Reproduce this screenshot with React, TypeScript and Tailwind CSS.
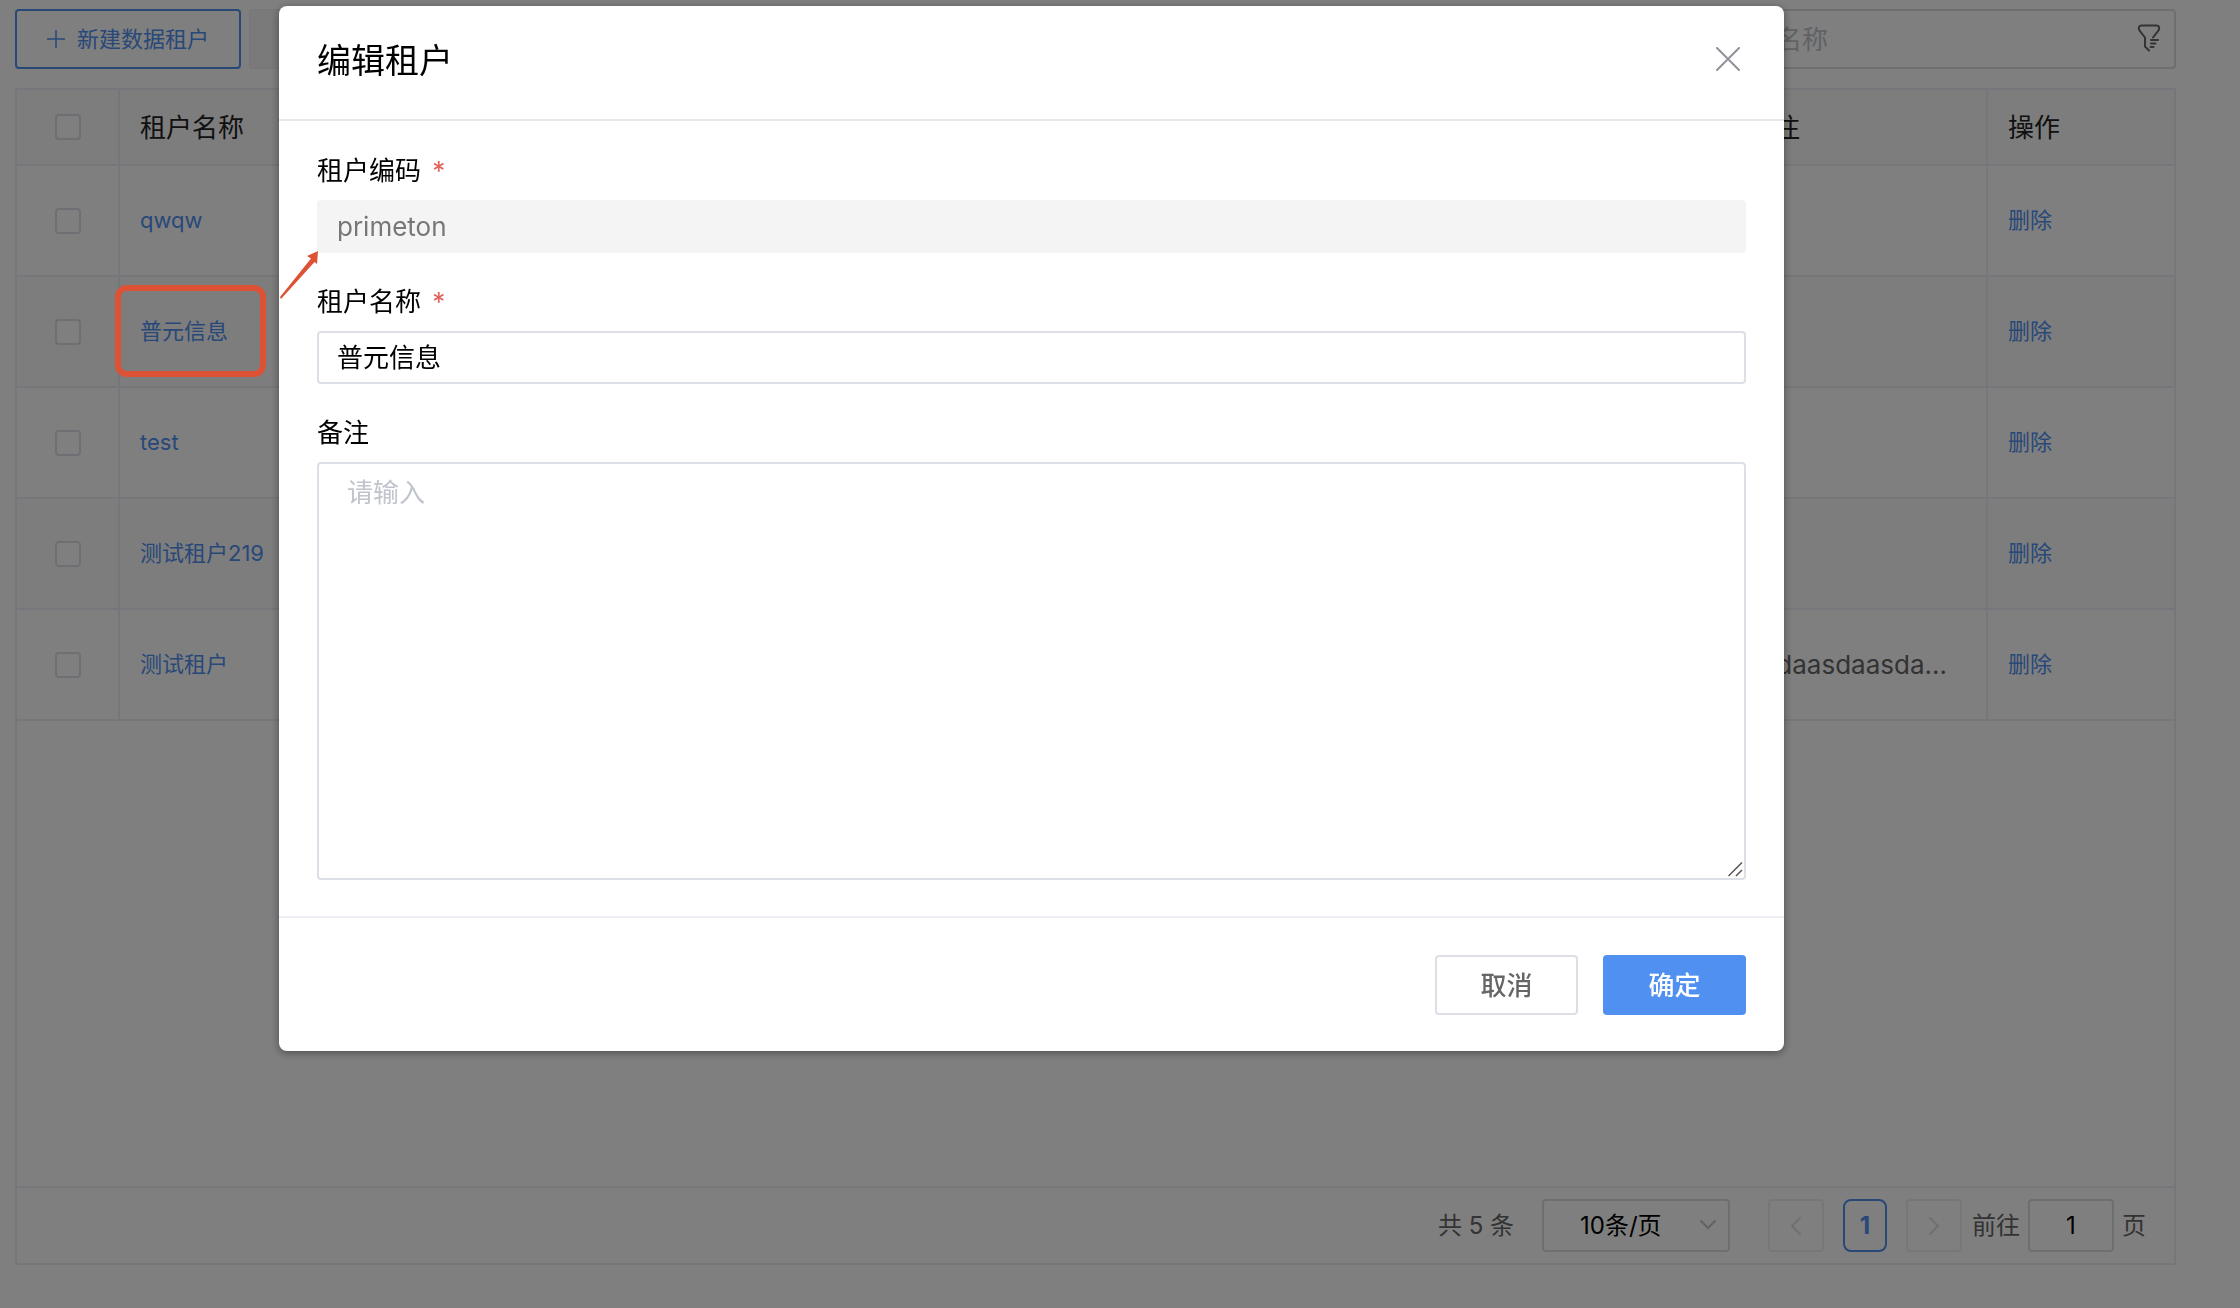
import { useState } from "react";
import { Trash2 } from "lucide-react";

type Tenant = {
  id: number;
  code: string;
  name: string;
  remark: string;
  marked?: boolean;
};

const TENANTS: Tenant[] = [
  { id: 1, code: "qwqw", name: "qwqw", remark: "" },
  { id: 2, code: "primeton", name: "普元信息", remark: "", marked: true },
  { id: 3, code: "test", name: "test", remark: "" },
  { id: 4, code: "test219", name: "测试租户219", remark: "" },
  { id: 5, code: "ceshi", name: "测试租户", remark: "asdaasdaasda..." },
];

const checkboxClass =
  "block mx-auto size-[26px] appearance-none rounded-sm border-2 border-[#dcdfe6] bg-white";

function FilterIcon() {
  return (
    <svg
      className="h-7 w-6"
      viewBox="0 0 24 28"
      fill="none"
      stroke="#666"
      strokeWidth="2"
      strokeLinecap="round"
      strokeLinejoin="round"
    >
      <path d="M16 13.5 L21.2 6.8 Q22.8 4.6 22 2.9 Q21.4 1.5 19.6 1.5 H4.4 Q2.6 1.5 2 2.9 Q1.2 4.6 2.8 6.8 L8 13.5 V22.5 L12 26.5" />
      <path d="M14 16 H21 M14 19.5 H18.5 M13.5 23 H16.5" />
    </svg>
  );
}

function Chevron({ d, className }: { d: string; className: string }) {
  return (
    <svg className={className} viewBox="0 0 20 20" fill="none" strokeWidth="2">
      <path d={d} stroke="currentColor" strokeLinecap="round" strokeLinejoin="round" />
    </svg>
  );
}

function Toolbar() {
  return (
    <div className="flex items-center justify-between">
      <div className="flex gap-2">
        <button className="flex h-[60px] items-center gap-3 rounded border-2 border-[#5090f1] bg-white px-[30px] text-[22px] text-[#5090f1]">
          <svg className="size-[18px]" viewBox="0 0 18 18" stroke="currentColor" strokeWidth="1.5">
            <path d="M9 0V18M0 9H18" />
          </svg>
          新建数据租户
        </button>
        <button
          disabled
          aria-label="批量删除"
          className="flex h-[60px] w-36 items-center justify-center rounded border-2 border-[#f0f0f5] bg-[#f5f5f5] text-[#c0c4cc]"
        >
          <Trash2 className="size-6" />
        </button>
      </div>
      <div className="relative w-[548px]">
        <input
          aria-label="租户名称"
          placeholder="请输入租户名称"
          className="h-[60px] w-full rounded border-2 border-[#dcdcdc] bg-white pl-4 pr-16 text-[26px] placeholder:text-[#c0c4cc]"
        />
        <button aria-label="筛选" className="absolute right-[15px] top-[15px]">
          <FilterIcon />
        </button>
      </div>
    </div>
  );
}

function TenantTable() {
  return (
    <table className="w-full table-fixed border-collapse text-left">
      <colgroup>
        <col className="w-[102px]" />
        <col />
        <col />
        <col className="w-[260px]" />
        <col className="w-[187px]" />
      </colgroup>
      <thead className="h-[75px] bg-[#fafafa] text-[26px] text-[#222]">
        <tr className="border-b-2 border-[#ebeef5]">
          <th className="border-r-2 border-[#ebeef5]">
            <input type="checkbox" aria-label="全选" className={checkboxClass} />
          </th>
          <th className="border-r-2 border-[#ebeef5] px-5 font-normal">租户名称</th>
          <th className="border-r-2 border-[#ebeef5] px-5 font-normal">租户编码</th>
          <th className="border-r-2 border-[#ebeef5] px-5 font-normal">备注</th>
          <th className="px-5 font-normal">操作</th>
        </tr>
      </thead>
      <tbody>
        {TENANTS.map((t) => (
          <tr key={t.id} className="h-[111px] border-b-2 border-[#ebeef5] even:bg-[#fafafa]">
            <td className="border-r-2 border-[#ebeef5]">
              <input type="checkbox" aria-label={t.name} className={checkboxClass} />
            </td>
            <td className="border-r-2 border-[#ebeef5] px-5 text-[22px]">
              <span className="relative inline-block">
                <a href="#edit" className="text-[#5090f1]">
                  {t.name}
                </a>
                {t.marked && (
                  <span className="absolute -left-[25px] -top-[30px] z-50 h-[92px] w-[151px] rounded-xl border-6 border-[#dd5135]" />
                )}
              </span>
            </td>
            <td className="border-r-2 border-[#ebeef5] px-5 text-[26px] text-[#666]">{t.code}</td>
            <td className="border-r-2 border-[#ebeef5] px-5 text-[26px] text-[#666]">{t.remark}</td>
            <td className="px-5 text-[22px]">
              <button className="text-[#5090f1]">删除</button>
            </td>
          </tr>
        ))}
      </tbody>
    </table>
  );
}

function Pagination() {
  return (
    <div className="flex h-[77px] items-center justify-end border-t-2 border-[#ebeef5] pr-7 text-[24px] text-[#666]">
      <span className="mr-7">共 5 条</span>
      <div className="relative mr-[38px]">
        <select
          aria-label="每页条数"
          className="h-[53px] w-[188px] appearance-none rounded border-2 border-[#dcdcdc] bg-white pl-9 text-black"
        >
          <option>10条/页</option>
        </select>
        <Chevron
          d="M3 6L10 13L17 6"
          className="pointer-events-none absolute right-3 top-4 size-5 text-[#c0c4cc]"
        />
      </div>
      <button
        disabled
        aria-label="上一页"
        className="flex h-[53px] w-14 items-center justify-center rounded border-2 border-[#ebeef5]"
      >
        <Chevron d="M14 2L6 10L14 18" className="size-5 text-[#dcdfe6]" />
      </button>
      <button className="mx-[19px] h-[53px] w-11 rounded-lg border-2 border-[#5090f1] font-bold text-[#5090f1]">
        1
      </button>
      <button
        disabled
        aria-label="下一页"
        className="flex h-[53px] w-14 items-center justify-center rounded border-2 border-[#ebeef5]"
      >
        <Chevron d="M6 2L14 10L6 18" className="size-5 text-[#dcdfe6]" />
      </button>
      <label className="ml-[10px] flex items-center gap-2">
        前往
        <input
          defaultValue="1"
          className="h-[53px] w-[86px] rounded border-2 border-[#dcdcdc] bg-white text-center text-black"
        />
        页
      </label>
    </div>
  );
}

function EditDialog() {
  const [name, setName] = useState("普元信息");
  const [remark, setRemark] = useState("");

  return (
    <div
      role="dialog"
      aria-labelledby="dialog-title"
      className="w-full rounded-lg bg-white shadow-[0_2px_8px_rgba(0,0,0,0.4)]"
    >
      <div className="flex h-[115px] items-center justify-between border-b-2 border-[#e8e8e8] pb-1 pl-[38px] pr-11">
        <h2 id="dialog-title" className="text-[34px] text-black">
          编辑租户
        </h2>
        <button aria-label="关闭" className="mb-1">
          <svg className="size-6" viewBox="0 0 24 24" stroke="#909399" strokeWidth="2" strokeLinecap="round">
            <path d="M1 1L23 23M23 1L1 23" />
          </svg>
        </button>
      </div>

      <div className="px-[38px] pb-9 pt-7 text-[26px] leading-[44px] text-black">
        <label htmlFor="code" className="block">
          租户编码 <span className="ml-1 text-[#e0625a]">*</span>
        </label>
        <div className="relative mb-[27px] mt-[7px]">
          <input
            id="code"
            disabled
            value="primeton"
            className="block h-[53px] w-full rounded bg-[#f4f4f4] px-5 text-[#777]"
          />
          <svg
            className="absolute -left-[38px] top-[51px] h-[48px] w-[40px]"
            viewBox="0 0 40 48"
            fill="#dd5135"
          >
            <path d="M39 0L28 5L32 7.5L1 46L2 48L35.5 11L38 13Z" />
          </svg>
        </div>

        <label htmlFor="name" className="block">
          租户名称 <span className="ml-1 text-[#e0625a]">*</span>
        </label>
        <input
          id="name"
          value={name}
          onChange={(e) => setName(e.target.value)}
          className="mb-[27px] mt-[7px] block h-[53px] w-full rounded border-2 border-[#dcdfe6] px-[18px] pb-1"
        />

        <label htmlFor="remark" className="block">
          备注
        </label>
        <div className="relative mt-[7px]">
          <textarea
            id="remark"
            value={remark}
            onChange={(e) => setRemark(e.target.value)}
            placeholder="请输入"
            className="block h-[418px] w-full resize-none rounded border-2 border-[#dcdfe6] px-7 py-[7px] placeholder:text-[#c0c4cc]"
          />
          <svg
            className="pointer-events-none absolute bottom-[3px] right-[3px] size-[15px]"
            viewBox="0 0 15 15"
            stroke="#555"
            strokeWidth="1.5"
          >
            <path d="M0.5 14L14 0.5M8 14L14 8" />
          </svg>
        </div>
      </div>

      <div className="flex justify-end gap-[25px] border-t-2 border-[#ebeef5] px-[38px] pb-9 pt-[37px] text-[26px] font-medium">
        <button className="h-[60px] w-[143px] rounded border-2 border-[#dcdfe6] text-[#666]">取消</button>
        <button className="h-[60px] w-[143px] rounded bg-[#5090f1] text-white">确定</button>
      </div>
    </div>
  );
}

export default function App() {
  return (
    <div className="min-h-screen bg-white font-['Inter','Noto_Sans_CJK_SC',sans-serif]">
      <div className="flex min-h-screen flex-col gap-[19px] pb-[43px] pl-[15px] pr-16 pt-[9px]">
        <Toolbar />
        <div className="flex flex-1 flex-col justify-between border-2 border-[#ebeef5]">
          <TenantTable />
          <Pagination />
        </div>
      </div>

      <div className="fixed inset-0 z-40 flex items-start bg-black/50 pl-[279px] pr-[456px] pt-[6px]">
        <EditDialog />
      </div>
    </div>
  );
}
